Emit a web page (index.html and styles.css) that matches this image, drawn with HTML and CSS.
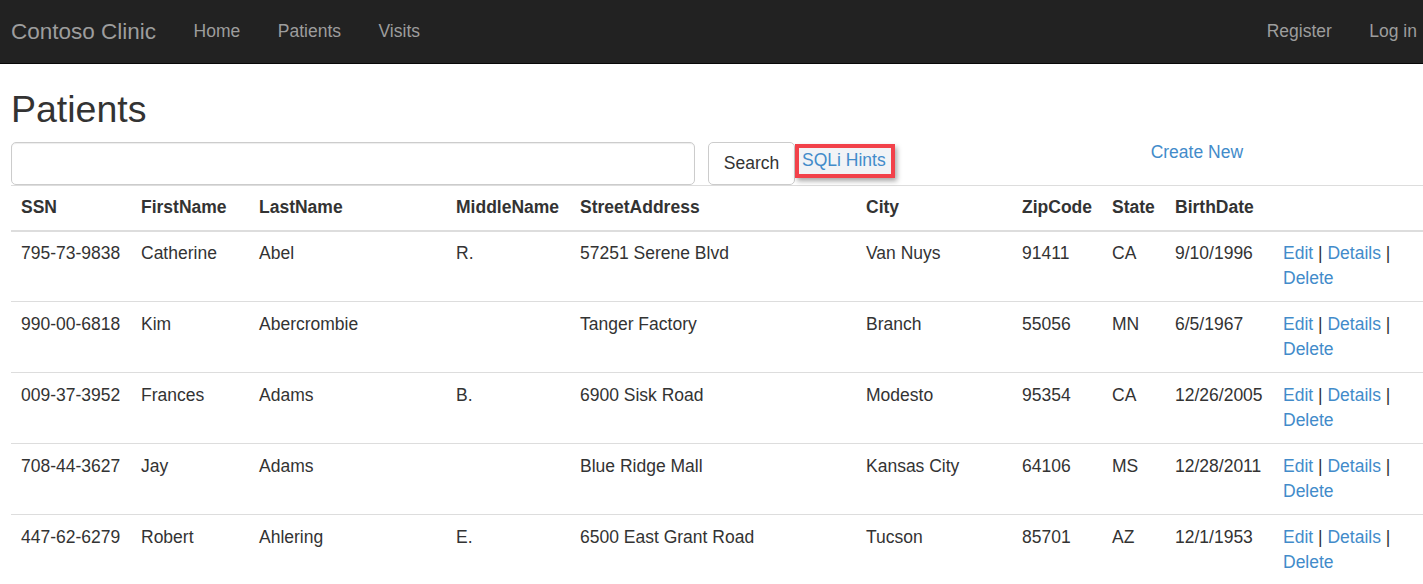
FILE: index.html
```html
<!DOCTYPE html>
<html lang="en">
<head>
<meta charset="utf-8">
<title>Patients - Contoso Clinic</title>
<link rel="stylesheet" href="styles.css">
</head>
<body>
<nav class="navbar">
  <a class="brand" href="#">Contoso Clinic</a>
  <ul class="nav">
    <li><a href="#">Home</a></li>
    <li><a href="#">Patients</a></li>
    <li><a href="#">Visits</a></li>
  </ul>
  <ul class="nav nav-right">
    <li><a href="#">Register</a></li>
    <li><a href="#">Log in</a></li>
  </ul>
</nav>
<main class="content">
  <h2 class="title">Patients</h2>
  <form class="search-row">
    <input class="search-input" type="text">
    <button class="btn" type="button">Search</button>
    <a class="hints" href="#">SQLi Hints</a>
    <a class="create" href="#">Create New</a>
  </form>
  <table class="table">
    <colgroup>
      <col class="c-ssn"><col class="c-first"><col class="c-last"><col class="c-middle"><col class="c-street"><col class="c-city"><col class="c-zip"><col class="c-state"><col class="c-birth"><col class="c-actions">
    </colgroup>
    <tr class="head">
      <th>SSN</th><th>FirstName</th><th>LastName</th><th>MiddleName</th><th>StreetAddress</th><th>City</th><th>ZipCode</th><th>State</th><th>BirthDate</th><th></th>
    </tr>
    <tr class="first">
      <td>795-73-9838</td><td>Catherine</td><td>Abel</td><td>R.</td><td>57251 Serene Blvd</td><td>Van Nuys</td><td>91411</td><td>CA</td><td>9/10/1996</td>
      <td><a href="#">Edit</a> | <a href="#">Details</a> | <a href="#">Delete</a></td>
    </tr>
    <tr>
      <td>990-00-6818</td><td>Kim</td><td>Abercrombie</td><td></td><td>Tanger Factory</td><td>Branch</td><td>55056</td><td>MN</td><td>6/5/1967</td>
      <td><a href="#">Edit</a> | <a href="#">Details</a> | <a href="#">Delete</a></td>
    </tr>
    <tr>
      <td>009-37-3952</td><td>Frances</td><td>Adams</td><td>B.</td><td>6900 Sisk Road</td><td>Modesto</td><td>95354</td><td>CA</td><td>12/26/2005</td>
      <td><a href="#">Edit</a> | <a href="#">Details</a> | <a href="#">Delete</a></td>
    </tr>
    <tr>
      <td>708-44-3627</td><td>Jay</td><td>Adams</td><td></td><td>Blue Ridge Mall</td><td>Kansas City</td><td>64106</td><td>MS</td><td>12/28/2011</td>
      <td><a href="#">Edit</a> | <a href="#">Details</a> | <a href="#">Delete</a></td>
    </tr>
    <tr>
      <td>447-62-6279</td><td>Robert</td><td>Ahlering</td><td>E.</td><td>6500 East Grant Road</td><td>Tucson</td><td>85701</td><td>AZ</td><td>12/1/1953</td>
      <td><a href="#">Edit</a> | <a href="#">Details</a> | <a href="#">Delete</a></td>
    </tr>
  </table>
</main>
</body>
</html>
```

FILE: styles.css
```css
html, body {
  margin: 0;
  padding: 0;
  overflow: hidden;
}
body {
  font-family: "Liberation Sans", Arial, sans-serif;
  font-size: 17.5px;
  line-height: 25px;
  color: #333;
  background: #fff;
}
a {
  color: #428bca;
  text-decoration: none;
}

/* Navbar */
.navbar {
  display: flex;
  align-items: stretch;
  height: 62.5px;
  background: #222;
  border-bottom: 1px solid #080808;
  padding-left: 11px;
}
.brand {
  color: #9d9d9d;
  font-size: 22.5px;
  line-height: 25px;
  padding: 18.75px 18.75px 18.75px 0;
}
.nav {
  display: flex;
  list-style: none;
  margin: 0;
  padding: 0;
}
.nav a {
  display: block;
  color: #9d9d9d;
  padding: 18.75px;
  line-height: 25px;
}
.nav-right {
  margin-left: auto;
  margin-right: -12.75px;
}

/* Content */
.content {
  padding-left: 11px;
}
.title {
  font-size: 37.5px;
  line-height: 1.1;
  font-weight: 500;
  margin: 25px 0 12.5px;
  color: #333;
}
.search-row {
  display: flex;
  align-items: flex-start;
  height: 42.5px;
  margin: 0;
}
.search-input {
  box-sizing: border-box;
  width: 684px;
  height: 42.5px;
  border: 1px solid #ccc;
  border-radius: 5px;
  box-shadow: inset 0 1px 1px rgba(0, 0, 0, .075);
  padding: 7.5px 15px;
  font: inherit;
  margin: 0;
}
.btn {
  box-sizing: border-box;
  width: 87px;
  height: 42.5px;
  margin: 0 0 0 13px;
  border: 1px solid #ccc;
  border-radius: 5px;
  background: #fff;
  color: #333;
  font: inherit;
  line-height: 25px;
  padding: 7.5px 0;
  text-align: center;
}
.hints {
  margin-top: 2px;
  padding: 0 5px 1px 3px;
  border: 4px solid #f2414a;
  background: #f1f3f6;
  box-shadow: 2px 3px 5px rgba(0, 0, 0, .35);
  line-height: 25px;
}
.create {
  margin-left: 256px;
  margin-top: -2px;
  line-height: 25px;
}

/* Table */
.table {
  table-layout: fixed;
  width: 1422px;
  border-collapse: separate;
  border-spacing: 0;
  border-top: 1px solid #ddd;
}
.c-ssn { width: 120px; }
.c-first { width: 118px; }
.c-last { width: 197px; }
.c-middle { width: 124px; }
.c-street { width: 286px; }
.c-city { width: 156px; }
.c-zip { width: 90px; }
.c-state { width: 63px; }
.c-birth { width: 108px; }
.c-actions { width: 160px; }

.table th {
  text-align: left;
  font-weight: bold;
  padding: 9px 10px 10px;
  border-bottom: 2px solid #ddd;
  vertical-align: bottom;
}
.table td {
  padding: 10px;
  border-top: 1px solid #ddd;
  vertical-align: top;
}
.table tr.first td {
  border-top: 0;
  padding-top: 9.5px;
  padding-bottom: 9.5px;
}
```
